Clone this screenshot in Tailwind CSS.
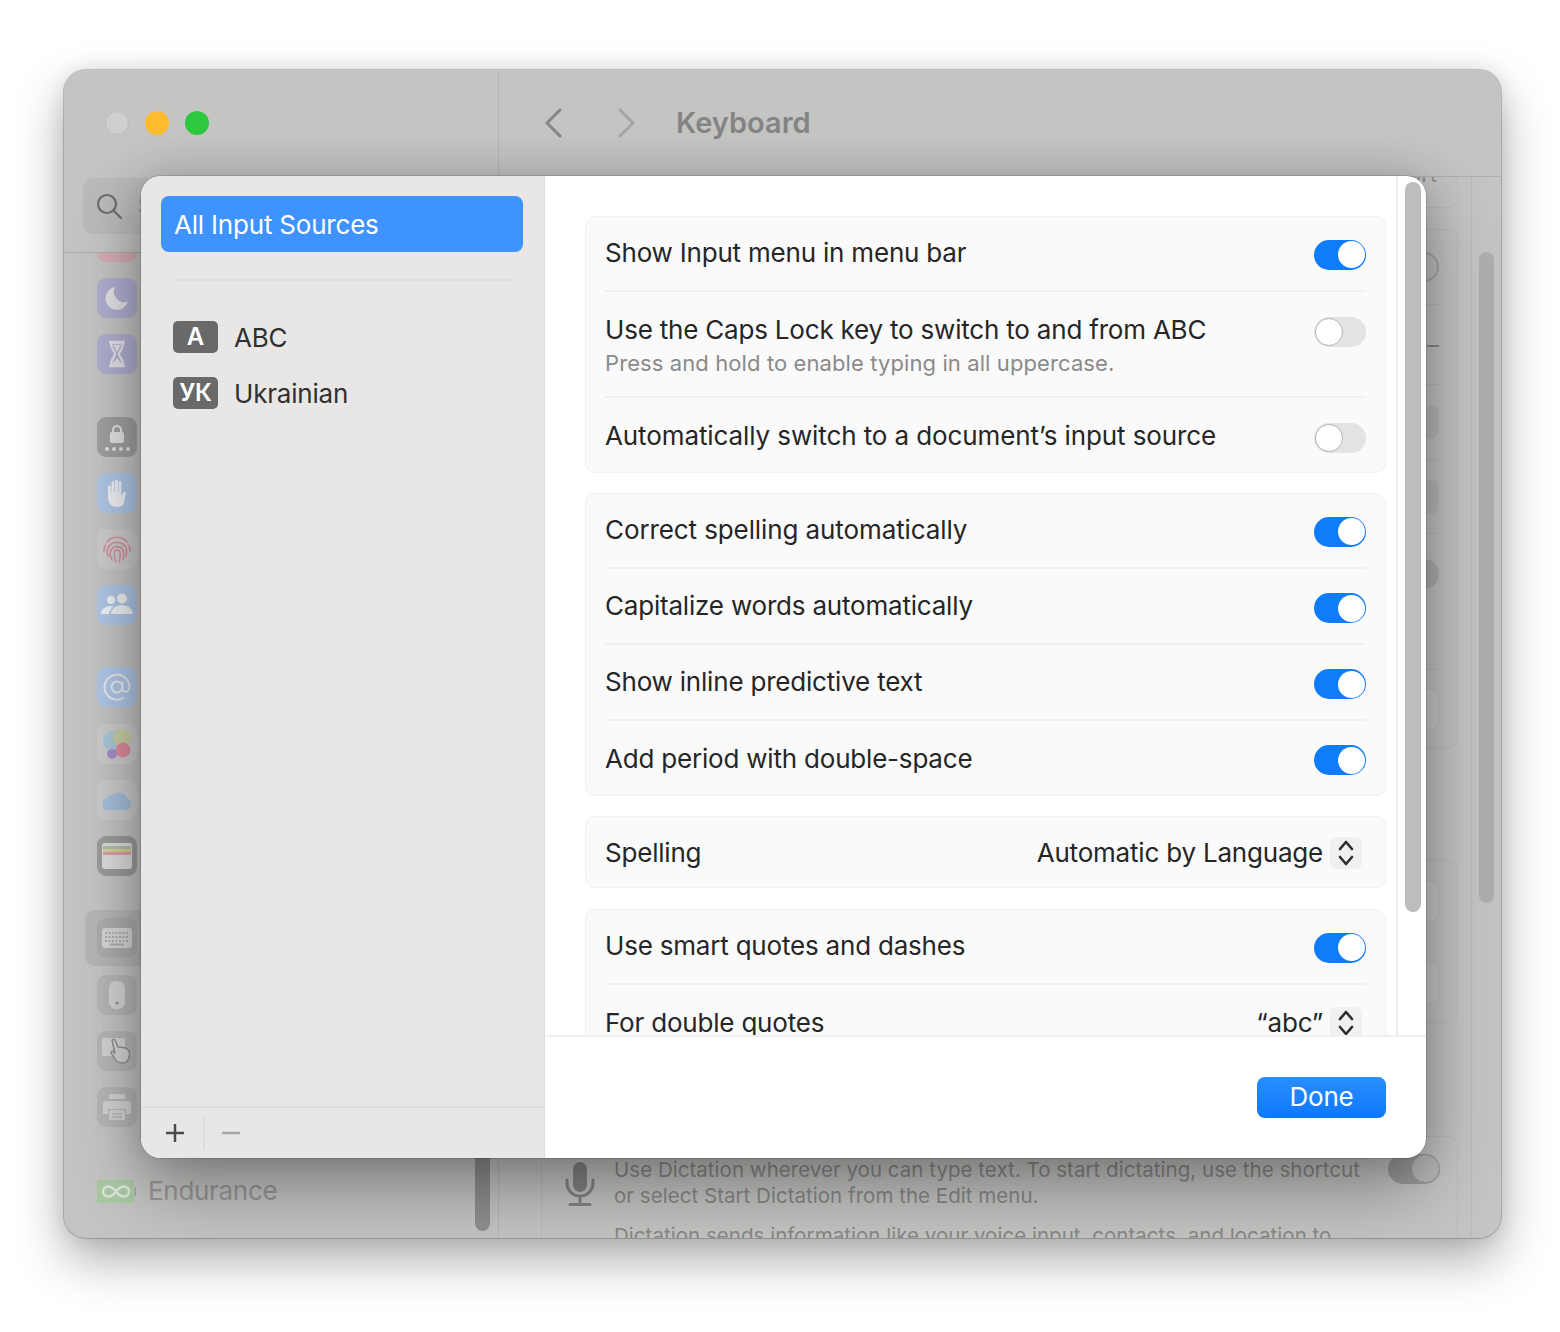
<!DOCTYPE html>
<html lang="en">
<head>
<meta charset="UTF-8">
<title>Keyboard</title>
<script src="https://cdn.jsdelivr.net/npm/@tailwindcss/browser@4"></script>
</head>
<body class="bg-white font-[Inter] w-[1560px] h-[1332px] overflow-hidden">
<div class="pt-[70px] pl-[64px]">
  <!-- dimmed window behind the sheet -->
  <div class="relative w-[1437px] h-[1168px] rounded-[22px] overflow-hidden flex bg-[#c4c4c2] shadow-[0_0_0_1px_rgba(0,0,0,0.18),0_22px_50px_rgba(0,0,0,0.32),0_0_20px_rgba(0,0,0,0.1)]">

    <!-- left sidebar -->
    <div class="w-[435px] shrink-0 flex flex-col border-r border-[#b6b6b4]">
      <div class="h-[183px] shrink-0 border-b border-[#adadab]">
        <div class="flex gap-[16px] pl-[41px] pt-[41px]">
          <div class="size-[24px] rounded-full bg-[#cfcfcd] border border-[#bcbcba]"></div>
          <div class="size-[24px] rounded-full bg-[#febb2e]"></div>
          <div class="size-[24px] rounded-full bg-[#2cc840]"></div>
        </div>
        <div class="mt-[43px] ml-[19px] w-[380px] h-[56px] rounded-[10px] bg-[#bababa] flex items-center pl-[13px] gap-[16px] text-[24px] text-[#8c8c8c]">
          <svg width="26" height="26" viewBox="0 0 26 26" fill="none" stroke="#6e6e6e" stroke-width="2.2" stroke-linecap="round"><circle cx="11" cy="11" r="9"/><path d="M17.5 17.5L25 25"/></svg>
          <span>Search</span>
        </div>
      </div>

      <div class="relative flex-1 overflow-hidden">
        <div class="absolute left-[21px] top-[657px] w-[400px] h-[56px] rounded-[10px] bg-[#b6b6b6]"></div>
        <div class="relative flex flex-col pl-[33px] -mt-[31px]">
          <div class="size-[40px] rounded-[9px] bg-[#d5abb1]"></div>
          <!-- moon -->
          <div class="mt-[16px] size-[40px] rounded-[9px] bg-[#b0aed0] flex items-center justify-center">
            <svg width="26" height="26" viewBox="0 0 26 26"><path d="M11 2a11.5 11.5 0 1 0 13 14.5A10.5 10.5 0 0 1 11 2z" fill="#e2e2e6"/></svg>
          </div>
          <!-- hourglass -->
          <div class="mt-[16px] size-[40px] rounded-[9px] bg-[#b0aed0] flex items-center justify-center">
            <svg width="20" height="28" viewBox="0 0 20 28" fill="none" stroke="#e2e2e6" stroke-width="2.4"><path d="M2 2h16M2 26h16"/><path d="M4 3c0 7 4 8 4 11s-4 4-4 11h12c0-7-4-8-4-11s4-4 4-11z"/><path d="M6 5h8l-4 7zM5 24l5-6 5 6z" fill="#e2e2e6" stroke="none"/></svg>
          </div>
          <!-- lock -->
          <div class="mt-[43px] size-[40px] rounded-[9px] bg-[#a0a0a0] flex flex-col items-center justify-center gap-[3px]">
            <svg width="16" height="20" viewBox="0 0 16 20"><path d="M4 9V6a4 4 0 0 1 8 0v3" fill="none" stroke="#e2e2e2" stroke-width="2"/><rect x="1" y="8" width="14" height="11" rx="2" fill="#e2e2e2"/></svg>
            <div class="flex gap-[3px]"><i class="size-[4px] rounded-full bg-[#e2e2e2]"></i><i class="size-[4px] rounded-full bg-[#e2e2e2]"></i><i class="size-[4px] rounded-full bg-[#e2e2e2]"></i><i class="size-[4px] rounded-full bg-[#e2e2e2]"></i></div>
          </div>
          <!-- hand -->
          <div class="mt-[16px] size-[40px] rounded-[9px] bg-[#afc6e6] flex items-center justify-center">
            <svg width="24" height="30" viewBox="0 0 24 30"><path d="M3 9a1.4 1.4 0 0 1 2.8 0v6h.7V4.500a1.400 1.400 0 0 1 2.800 0V14h.7V2.800a1.400 1.400 0 0 1 2.800 0V14h.7V4.500a1.400 1.400 0 0 1 2.800 0V18l2-3.500c.8-1.400 3.200-.5 2.500 1.200L19 25c-1.200 3-3.500 4-6.500 4C7 29 3 26 3 20z" fill="#eef0f3"/></svg>
          </div>
          <!-- fingerprint -->
          <div class="mt-[16px] size-[40px] rounded-[9px] bg-[#cbcbcb] flex items-center justify-center">
            <svg width="30" height="30" viewBox="0 0 30 30" fill="none" stroke="#d68f9f" stroke-width="1.600" stroke-linecap="round"><path d="M5 8a13 13 0 0 1 20 0"/><path d="M2 17c0-2 .5-4 1.500-5.500M27 12c.8 1.500 1 3 1 5"/><path d="M6 22c-1-3-1-6 0-8a10 10 0 0 1 18 0c1 3 .5 6 0 8"/><path d="M10 26c-2-4-2-8-1-10a7 7 0 0 1 12 0c1 3 1 6 0 10"/><path d="M14 28c-2-4-2-8-1-11a3 3 0 0 1 5 1c.5 3 0 7-1 10"/></svg>
          </div>
          <!-- users -->
          <div class="mt-[16px] size-[40px] rounded-[9px] bg-[#afc6e6] flex items-center justify-center">
            <svg width="32" height="24" viewBox="0 0 32 24" fill="#eef0f3"><circle cx="10" cy="7" r="4"/><circle cx="21" cy="5.500" r="5"/><path d="M0 21c0-4 4-8 9-8 1.500 0 2.500.3 3.500.8C10 15.500 8.500 18 8 21zM10 21c0-5 5-9 11-9s11 4 11 9z"/></svg>
          </div>
          <!-- at sign -->
          <div class="mt-[42px] size-[40px] rounded-[9px] bg-[#afc6e6] flex items-center justify-center">
            <svg width="28" height="28" viewBox="0 0 28 28" fill="none" stroke="#e4e8ee" stroke-width="2"><circle cx="14" cy="14" r="5.500"/><path d="M19.500 8.500V16c0 4 6.500 4 7-2A12.500 12.500 0 1 0 21 24.500"/></svg>
          </div>
          <!-- colour circles -->
          <div class="mt-[17px] size-[40px] rounded-[9px] bg-[#cbcbcb] flex items-center justify-center">
            <svg width="30" height="30" viewBox="0 0 30 30"><circle cx="11" cy="12" r="10" fill="#a9c6d8"/><circle cx="20" cy="9" r="9" fill="#c9cd9f" fill-opacity="0.9"/><circle cx="21" cy="21" r="7.500" fill="#de8c9c"/><circle cx="10" cy="25" r="5" fill="#a48fc9"/></svg>
          </div>
          <!-- cloud -->
          <div class="mt-[16px] size-[40px] rounded-[9px] bg-[#cbcbcb] flex items-center justify-center">
            <svg width="32" height="22" viewBox="0 0 32 22"><path d="M7 21a6 6 0 0 1-1-11.800A6 6 0 0 1 12 6a9 9 0 0 1 15 4.500A5.500 5.500 0 0 1 26 21z" fill="#a4c0da"/></svg>
          </div>
          <!-- wallet -->
          <div class="mt-[16px] size-[40px] rounded-[9px] bg-[#9c9c9c] flex items-center justify-center">
            <div class="w-[30px] h-[26px] rounded-[3px] bg-[#dcdcdc] flex flex-col overflow-hidden pt-[3px] px-[1px]">
              <div class="h-[3px] bg-[#a9c4a8]"></div>
              <div class="h-[3px] bg-[#d8cf9a]"></div>
              <div class="h-[3px] bg-[#dba0a6]"></div>
            </div>
          </div>
          <!-- keyboard -->
          <div class="mt-[42px] size-[40px] rounded-[9px] bg-[#adadad] flex items-center justify-center">
            <svg width="30" height="20" viewBox="0 0 30 20"><rect width="30" height="20" rx="3" fill="#d5d5d5"/><path d="M3 5h24M3 9h24M3 13h24" stroke="#adadad" stroke-width="2" stroke-dasharray="2 1.500"/><path d="M8 16.500h14" stroke="#adadad" stroke-width="2"/></svg>
          </div>
          <!-- mouse -->
          <div class="mt-[17px] size-[40px] rounded-[9px] bg-[#b6b6b6] flex items-center justify-center">
            <svg width="16" height="28" viewBox="0 0 16 28"><rect width="16" height="28" rx="7" fill="#d3d3d3"/><circle cx="8" cy="22" r="1.500" fill="#8f8f8f"/></svg>
          </div>
          <!-- trackpad -->
          <div class="mt-[16px] size-[40px] rounded-[9px] bg-[#b6b6b6] flex items-center justify-center">
            <svg width="30" height="30" viewBox="0 0 30 30"><rect y="2" width="23" height="18" rx="2" fill="#d3d3d3"/><path d="M10 4c1.500-1 3-.5 3.500 1L16 11l5 .5c4 .5 6 2 6.500 5.500.5 5-2 10-7.500 10-3.500 0-5.500-1.500-7.500-5L9 17c-.5-1.500 2-2.500 3-1l1 1.500z" fill="#d3d3d3" stroke="#8f8f8f" stroke-width="1.500"/></svg>
          </div>
          <!-- printer -->
          <div class="mt-[16px] size-[40px] rounded-[9px] bg-[#b6b6b6] flex items-center justify-center">
            <svg width="28" height="28" viewBox="0 0 28 28"><rect x="6" y="1" width="16" height="5" rx="1" fill="#d3d3d3"/><path d="M3 8h22a3 3 0 0 1 3 3v10h-5v-5H5v5H0V11a3 3 0 0 1 3-3z" fill="#d3d3d3"/><rect x="6" y="17" width="16" height="10" rx="1" fill="#d3d3d3"/><path d="M9 21h10M9 24h10" stroke="#b6b6b6" stroke-width="1.500"/></svg>
          </div>
          <!-- battery row -->
          <div class="mt-[48px] flex items-center gap-[12px]">
            <svg width="39" height="23" viewBox="0 0 39 23" fill="none"><rect width="37" height="23" rx="2" fill="#a9c9a3"/><rect x="37.500" y="7" width="1.500" height="9" fill="#a2a2a2"/><path d="M19 11.500c-3-4-5-5-8-5a5 5 0 0 0 0 10c3 0 5-1 8-5s5-5 8-5a5 5 0 0 1 0 10c-3 0-5-1-8-5z" stroke="#dfe7db" stroke-width="2.500"/></svg>
            <span class="text-[26px] leading-[32px] text-[#979797] tracking-[-0.3px]">Endurance</span>
          </div>
        </div>
        <div class="absolute left-[411px] top-[850px] w-[15px] h-[128px] rounded-full bg-[#8f8f8f]"></div>
      </div>
    </div>

    <!-- right pane -->
    <div class="flex-1 flex flex-col min-w-0">
      <div class="h-[107px] shrink-0 border-b border-[#b0b0ae] flex items-center pl-[45px]">
        <svg width="18" height="30" viewBox="0 0 18 30" fill="none" stroke="#868686" stroke-width="3" stroke-linecap="round" stroke-linejoin="round"><path d="M16 2L3 15l13 13"/></svg>
        <svg class="ml-[56px]" width="18" height="30" viewBox="0 0 18 30" fill="none" stroke="#a5a5a5" stroke-width="3" stroke-linecap="round" stroke-linejoin="round"><path d="M2 2l13 13L2 28"/></svg>
        <span class="ml-[40px] text-[29px] font-semibold text-[#848484]">Keyboard</span>
      </div>
      <div class="flex-1 flex min-h-0">
        <div class="w-[973px] shrink-0 overflow-hidden border-r border-black/5 pl-[42px] pr-[13px]">
          <div class="h-[31px] rounded-b-[10px] border border-t-0 border-black/5 flex justify-end items-start pr-[20px] overflow-hidden">
            <span class="text-[22px] leading-[26px] -mt-[16px] text-[#8c8c8c]">Report</span>
          </div>
          <div class="mt-[21px] h-[519px] rounded-[10px] border border-black/5 pl-[20px] pr-[18px] flex flex-col">
            <div class="h-[75px] border-b border-black/5 flex justify-end items-center">
              <div class="w-[52px] h-[30px] rounded-full flex justify-end"><div class="size-[30px] rounded-full border-2 border-[#a6a6a6] bg-[#c0c0be]"></div></div>
            </div>
            <div class="h-[80px] border-b border-black/5 flex justify-end items-center text-[24px] text-[#8a8a8a]">⌄–</div>
            <div class="h-[75px] border-b border-black/5 flex justify-end items-center">
              <div class="w-[40px] h-[34px] rounded-[8px] bg-black/5"></div>
            </div>
            <div class="h-[74px] border-b border-black/5 flex justify-end items-center">
              <div class="w-[40px] h-[34px] rounded-[8px] bg-black/5"></div>
            </div>
            <div class="h-[136px] border-b border-black/5 flex justify-end items-start pt-[25px]">
              <div class="size-[30px] rounded-full bg-black/10"></div>
            </div>
            <div class="flex-1 flex justify-end items-center">
              <div class="w-[40px] h-[42px] rounded-[9px] bg-white/10 border border-black/5"></div>
            </div>
          </div>
          <div class="mt-[112px] h-[163px] rounded-[10px] border border-black/5 pl-[20px] pr-[18px] flex flex-col justify-center gap-[40px]">
            <div class="flex justify-end"><div class="w-[40px] h-[42px] rounded-[9px] bg-white/10 border border-black/5"></div></div>
            <div class="flex justify-end"><div class="w-[40px] h-[42px] rounded-[9px] bg-white/10 border border-black/5"></div></div>
          </div>
          <div class="mt-[113px] h-[200px] rounded-t-[10px] border border-black/5 pl-[23px] pr-[17px] flex items-start pt-[20px]">
            <svg class="shrink-0 mt-[5px]" width="30" height="44" viewBox="0 0 30 44" fill="none"><rect x="8" y="0" width="14" height="30" rx="7" fill="#858585"/><path d="M2 18v3a13 13 0 0 0 26 0v-3M15 35v7M5 42.500h20" stroke="#858585" stroke-width="3" stroke-linecap="round"/></svg>
            <div class="ml-[19px] flex-1 min-w-0 text-[20.5px] leading-[26px] text-[#898989] tracking-[0.03px]">
              <div class="whitespace-nowrap">Use Dictation wherever you can type text. To start dictating, use the shortcut</div>
              <div class="whitespace-nowrap">or select Start Dictation from the Edit menu.</div>
              <div class="whitespace-nowrap mt-[14px]">Dictation sends information like your voice input, contacts, and location to</div>
            </div>
            <div class="shrink-0 -mt-[3px] w-[52px] h-[30px] rounded-full bg-[#9b9b9b] flex justify-end"><div class="size-[29px] rounded-full bg-[#bababa] border border-[#9a9a9a]"></div></div>
          </div>
        </div>
        <div class="flex-1 pl-[7px] pt-[75px]">
          <div class="w-[15px] h-[651px] rounded-full bg-[#aeaeae]"></div>
        </div>
      </div>
    </div>

    <!-- sheet -->
    <div class="absolute left-[77px] top-[106px] w-[1285px] h-[982px] rounded-[20px] overflow-hidden flex bg-white tracking-[-0.2px] shadow-[0_30px_70px_rgba(0,0,0,0.34),0_0_40px_rgba(0,0,0,0.16),0_0_0_1px_rgba(0,0,0,0.12)]">
      <!-- source list -->
      <div class="w-[404px] shrink-0 bg-[#e8e7e5] border-r border-[#dedddb] flex flex-col text-[26px]">
        <div class="ml-[20px] w-[362px] mt-[20px] h-[56px] rounded-[8px] bg-[#3f93ff] text-white flex items-center pl-[13px]">All Input Sources</div>
        <div class="ml-[32px] w-[338px] mt-[27px] h-[2px] bg-[#dfdedc]"></div>
        <div class="mx-[32px] mt-[40px] flex items-center gap-[16px] h-[32px] text-[#303030]">
          <span class="w-[45px] h-[32px] rounded-[5px] bg-[#696969] text-white text-[24px] font-semibold flex items-center justify-center">A</span>ABC
        </div>
        <div class="mx-[32px] mt-[24px] flex items-center gap-[16px] h-[32px] text-[#303030]">
          <span class="w-[45px] h-[32px] rounded-[5px] bg-[#696969] text-white text-[24px] font-semibold flex items-center justify-center">УК</span>Ukrainian
        </div>
        <div class="mt-auto h-[52px] border-t-2 border-[#dfdedc] flex items-center">
          <svg class="ml-[24px]" width="20" height="20" viewBox="0 0 20 20" stroke="#4a4a4a" stroke-width="2.500"><path d="M10 1v18M1 10h18"/></svg>
          <div class="ml-[18px] w-[2px] h-[33px] bg-[#dfdedc]"></div>
          <svg class="ml-[16px]" width="20" height="20" viewBox="0 0 20 20" stroke="#a5a5a5" stroke-width="2.500"><path d="M1 10h18"/></svg>
        </div>
      </div>

      <!-- settings -->
      <div class="flex-1 flex flex-col min-w-0">
        <div class="h-[861px] shrink-0 flex overflow-hidden border-b-2 border-[#efefef]">
          <div class="w-[851px] shrink-0 pl-[40px] pr-[10px] pt-[40px] flex flex-col gap-[20px] text-[26px] text-[#262626]">
            <div class="shrink-0 rounded-[10px] border border-[#f1f1f1] bg-[#fafafa] px-[19px]">
              <div class="h-[75px] flex items-center justify-between border-b-2 border-[#f0f0f0]">
                <span class="pb-[2px]">Show Input menu in menu bar</span>
                <div class="w-[52px] h-[30px] mt-[2px] rounded-full bg-[#0f7cfa] flex justify-end items-center pr-[1px]"><div class="size-[27px] rounded-full bg-white"></div></div>
              </div>
              <div class="h-[106px] flex items-start justify-between border-b-2 border-[#f0f0f0] pt-[21px]">
                <div>
                  <div class="leading-[34px]">Use the Caps Lock key to switch to and from ABC</div>
                  <div class="text-[22px] leading-[26px] mt-[3px] text-[#8a8a8a] tracking-[0.1px]">Press and hold to enable typing in all uppercase.</div>
                </div>
                <div class="w-[52px] h-[30px] mt-[4px] rounded-full bg-[#e3e3e3] flex items-center pl-[1px]"><div class="size-[28px] rounded-full bg-white border border-[#b5b5b5]"></div></div>
              </div>
              <div class="h-[74px] flex items-center justify-between">
                <span class="tracking-[-0.1px]">Automatically switch to a document’s input source</span>
                <div class="w-[52px] h-[30px] mt-[6px] rounded-full bg-[#e3e3e3] flex items-center pl-[1px]"><div class="size-[28px] rounded-full bg-white border border-[#b5b5b5]"></div></div>
              </div>
            </div>

            <div class="shrink-0 rounded-[10px] border border-[#f1f1f1] bg-[#fafafa] px-[19px]">
              <div class="h-[75px] flex items-center justify-between border-b-2 border-[#f0f0f0]">
                <span class="pb-[2px] tracking-[-0.1px]">Correct spelling automatically</span>
                <div class="w-[52px] h-[30px] mt-[2px] rounded-full bg-[#0f7cfa] flex justify-end items-center pr-[1px]"><div class="size-[27px] rounded-full bg-white"></div></div>
              </div>
              <div class="h-[76px] flex items-center justify-between border-b-2 border-[#f0f0f0]">
                <span class="pb-[2px]">Capitalize words automatically</span>
                <div class="w-[52px] h-[30px] mt-[4px] rounded-full bg-[#0f7cfa] flex justify-end items-center pr-[1px]"><div class="size-[27px] rounded-full bg-white"></div></div>
              </div>
              <div class="h-[76px] flex items-center justify-between border-b-2 border-[#f0f0f0]">
                <span class="pb-[2px]">Show inline predictive text</span>
                <div class="w-[52px] h-[30px] mt-[4px] rounded-full bg-[#0f7cfa] flex justify-end items-center pr-[1px]"><div class="size-[27px] rounded-full bg-white"></div></div>
              </div>
              <div class="h-[74px] flex items-center justify-between">
                <span>Add period with double-space</span>
                <div class="w-[52px] h-[30px] mt-[4px] rounded-full bg-[#0f7cfa] flex justify-end items-center pr-[1px]"><div class="size-[27px] rounded-full bg-white"></div></div>
              </div>
            </div>

            <div class="shrink-0 h-[72px] rounded-[10px] border border-[#f1f1f1] bg-[#fafafa] pl-[19px] pr-[23px] flex items-center justify-between">
              <span>Spelling</span>
              <div class="flex items-center gap-[7px]">
                <span>Automatic by Language</span>
                <span class="size-[32px] mt-[2px] rounded-[6px] bg-[#f0f0f0] flex items-center justify-center">
                  <svg width="16" height="26" viewBox="0 0 16 26" fill="none" stroke="#2c2c2c" stroke-width="2.600" stroke-linecap="round" stroke-linejoin="round"><path d="M2 9l6-7 6 7M2 17l6 7 6-7"/></svg>
                </span>
              </div>
            </div>

            <div class="shrink-0 h-[200px] mt-px rounded-[10px] border border-[#f1f1f1] bg-[#fafafa] px-[19px]">
              <div class="h-[75px] flex items-center justify-between border-b-2 border-[#f0f0f0]">
                <span class="pb-[2px]">Use smart quotes and dashes</span>
                <div class="w-[52px] h-[30px] mt-[2px] rounded-full bg-[#0f7cfa] flex justify-end items-center pr-[1px]"><div class="size-[27px] rounded-full bg-white"></div></div>
              </div>
              <div class="h-[76px] flex items-center justify-between pr-[4px]">
                <span class="pb-[2px]">For double quotes</span>
                <div class="flex items-center gap-[7px]">
                  <span class="pb-[2px]">“abc”</span>
                  <span class="size-[32px] rounded-[6px] bg-[#f0f0f0] flex items-center justify-center">
                    <svg width="16" height="26" viewBox="0 0 16 26" fill="none" stroke="#2c2c2c" stroke-width="2.600" stroke-linecap="round" stroke-linejoin="round"><path d="M2 9l6-7 6 7M2 17l6 7 6-7"/></svg>
                  </span>
                </div>
              </div>
            </div>
          </div>
          <div class="flex-1 border-l-2 border-[#ececec] pl-[7px] pt-[6px]">
            <div class="w-[16px] h-[730px] rounded-full bg-[#bdbdbd]"></div>
          </div>
        </div>
        <div class="flex-1 flex items-start justify-end pt-[40px] pr-[40px]">
          <button class="w-[129px] h-[41px] pb-[3px] rounded-[8px] bg-gradient-to-b from-[#2a8dff] to-[#0a78fb] text-white text-[26px] flex items-center justify-center">Done</button>
        </div>
      </div>
    </div>
  </div>
</div>
</body>
</html>
